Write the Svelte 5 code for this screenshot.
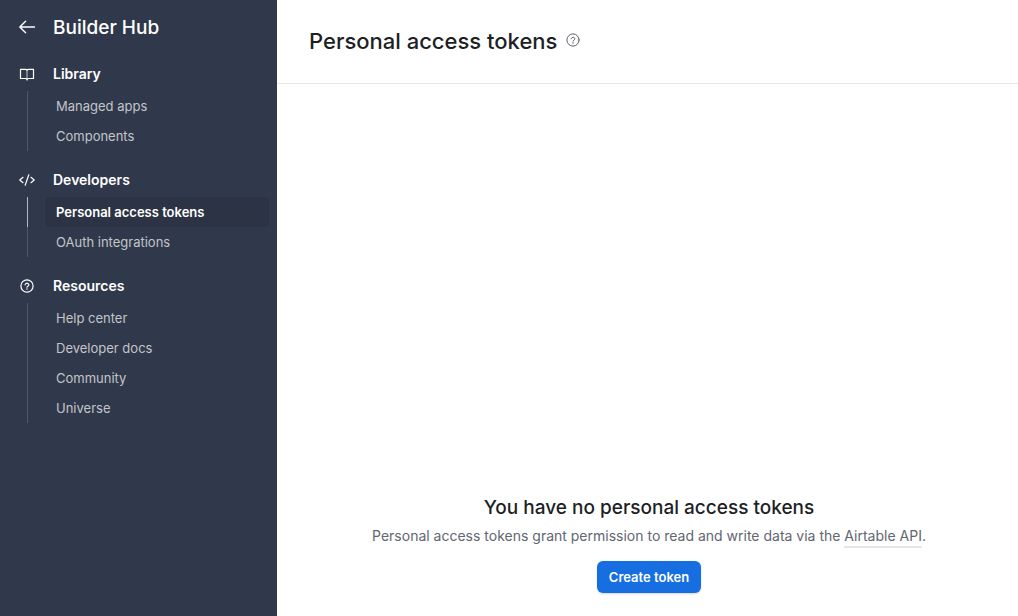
<script lang="ts">
  type NavItem = { label: string; href: string };
  type NavSection = { title: string; icon: "book" | "code" | "help"; items: NavItem[] };

  const sections: NavSection[] = [
    {
      title: "Library",
      icon: "book",
      items: [
        { label: "Managed apps", href: "#managed-apps" },
        { label: "Components", href: "#components" },
      ],
    },
    {
      title: "Developers",
      icon: "code",
      items: [
        { label: "Personal access tokens", href: "#tokens" },
        { label: "OAuth integrations", href: "#oauth" },
      ],
    },
    {
      title: "Resources",
      icon: "help",
      items: [
        { label: "Help center", href: "#help" },
        { label: "Developer docs", href: "#docs" },
        { label: "Community", href: "#community" },
        { label: "Universe", href: "#universe" },
      ],
    },
  ];

  let current = "#tokens";
</script>

{#snippet helpIcon()}
  <svg width="16" height="16" viewBox="0 0 16 16" aria-hidden="true">
    <circle cx="8" cy="8" r="6.1" />
    <path d="M6.2 6.8a1.8 1.6 0 1 1 2.7 1.4c-.6.3-.9.5-.9 1" />
    <circle class="dot" cx="8" cy="11" r="0.75" />
  </svg>
{/snippet}

<div class="app">
  <aside>
    <header class="brand">
      <a class="back" href="#home" aria-label="Back">
        <svg width="18" height="18" viewBox="0 0 18 18" aria-hidden="true">
          <path d="M16.5 9H2M7.6 3.2L1.8 9l5.8 5.8" />
        </svg>
      </a>
      <span>Builder Hub</span>
    </header>

    <nav aria-label="Builder Hub">
      {#each sections as section}
        <section>
          <h2>
            <span class="icon">
              {#if section.icon === "book"}
                <svg width="16" height="16" viewBox="0 0 16 16" aria-hidden="true">
                  <path d="M8 4.4c0-.7-.5-1.1-1.2-1.1H1.5v9.2h5c.9 0 1.5.5 1.5 1.3 0-.8.6-1.3 1.5-1.3h5V3.3H9.2C8.5 3.3 8 3.7 8 4.4z" />
                  <path class="spine" d="M8 4.4v9.4" />
                </svg>
              {:else if section.icon === "code"}
                <svg width="16" height="16" viewBox="0 0 16 16" aria-hidden="true">
                  <path d="M4 5.3L.8 8 4 10.7M12 5.3L15.2 8 12 10.7M9.8 2.8L6.2 13.2" />
                </svg>
              {:else}
                {@render helpIcon()}
              {/if}
            </span>
            {section.title}
          </h2>
          <ul>
            {#each section.items as item}
              <li class:active={item.href === current}>
                <a href={item.href} aria-current={item.href === current ? "page" : undefined} on:click={() => (current = item.href)}>{item.label}</a>
              </li>
            {/each}
          </ul>
        </section>
      {/each}
    </nav>
  </aside>

  <main>
    <header class="page-header">
      <h1>Personal access tokens</h1>
      <button class="help" type="button" aria-label="About personal access tokens">{@render helpIcon()}</button>
    </header>

    <div class="empty">
      <h2>You have no personal access tokens</h2>
      <p>Personal access tokens grant permission to read and write data via the <a href="#api">Airtable API</a>.</p>
      <button class="create" type="button">Create token</button>
    </div>
  </main>
</div>

<style>
  :global(body) {
    margin: 0;
    font-family: Inter, "Liberation Sans", sans-serif;
  }

  .app {
    display: flex;
    min-height: 100vh;
    background: #ffffff;
    color: #1d1f25;
  }

  aside {
    box-sizing: border-box;
    flex: 0 0 277px;
    background: #30394b;
    color: #ffffff;
  }

  svg {
    display: block;
    fill: none;
    stroke: currentColor;
    stroke-width: 1.2;
    stroke-linecap: round;
    stroke-linejoin: round;
  }

  svg .dot {
    fill: currentColor;
    stroke: none;
  }

  svg .spine {
    opacity: 0.6;
  }

  .brand {
    display: flex;
    align-items: center;
    height: 54px;
    margin-bottom: 3px;
    font-size: 19px;
    font-weight: 500;
  }

  .back {
    margin: 0 17px 0 18px;
    color: #ffffff;
  }

  .back svg {
    stroke-width: 1.4;
  }

  section {
    margin-bottom: 12px;
  }

  aside h2 {
    display: flex;
    align-items: center;
    height: 33px;
    margin: 0 0 1px;
    font-size: 14px;
    font-weight: 600;
    line-height: 18px;
  }

  .icon {
    margin: 0 18px 0 19px;
  }

  ul {
    margin: 0 8px 0 27px;
    padding: 0;
    list-style: none;
  }

  li {
    padding-left: 17px;
    border-left: 1px solid #4f5766;
  }

  li.active {
    border-color: #b4b8bf;
  }

  li a {
    display: block;
    padding: 0 11px;
    border-radius: 4px;
    color: #c3c5ca;
    font-size: 13px;
    line-height: 30px;
    text-decoration: none;
  }

  li.active a {
    background: #2b3344;
    color: #ffffff;
    font-weight: 600;
  }

  main {
    flex: 1;
    min-width: 0;
  }

  .page-header {
    display: flex;
    align-items: center;
    gap: 8px;
    padding: 25px 32px 26px;
    border-bottom: 1px solid #e5e6e8;
  }

  h1 {
    margin: 0;
    font-size: 22px;
    font-weight: 500;
    line-height: 32px;
  }

  .help {
    padding: 0 0 2px;
    border: 0;
    background: none;
    color: #5c5f68;
  }

  .help svg {
    stroke-width: 1;
  }

  .empty {
    display: flex;
    flex-direction: column;
    align-items: center;
    padding: 412px 16px 23px 19px;
    text-align: center;
  }

  .empty h2 {
    margin: 0;
    font-size: 19px;
    font-weight: 500;
    line-height: 24px;
  }

  p {
    margin: 5px 0 14px;
    color: #616670;
    font-size: 14px;
    line-height: 22px;
  }

  p a {
    padding-bottom: 2px;
    border-bottom: 2px solid #e5e6e8;
    color: inherit;
    text-decoration: none;
  }

  .create {
    height: 32px;
    padding: 0 12px;
    border: 0;
    border-radius: 6px;
    background: #166ee1;
    box-shadow: 0 1px 2px rgba(0, 0, 0, 0.16);
    color: #ffffff;
    font-family: inherit;
    font-size: 13px;
    font-weight: 600;
  }
</style>
